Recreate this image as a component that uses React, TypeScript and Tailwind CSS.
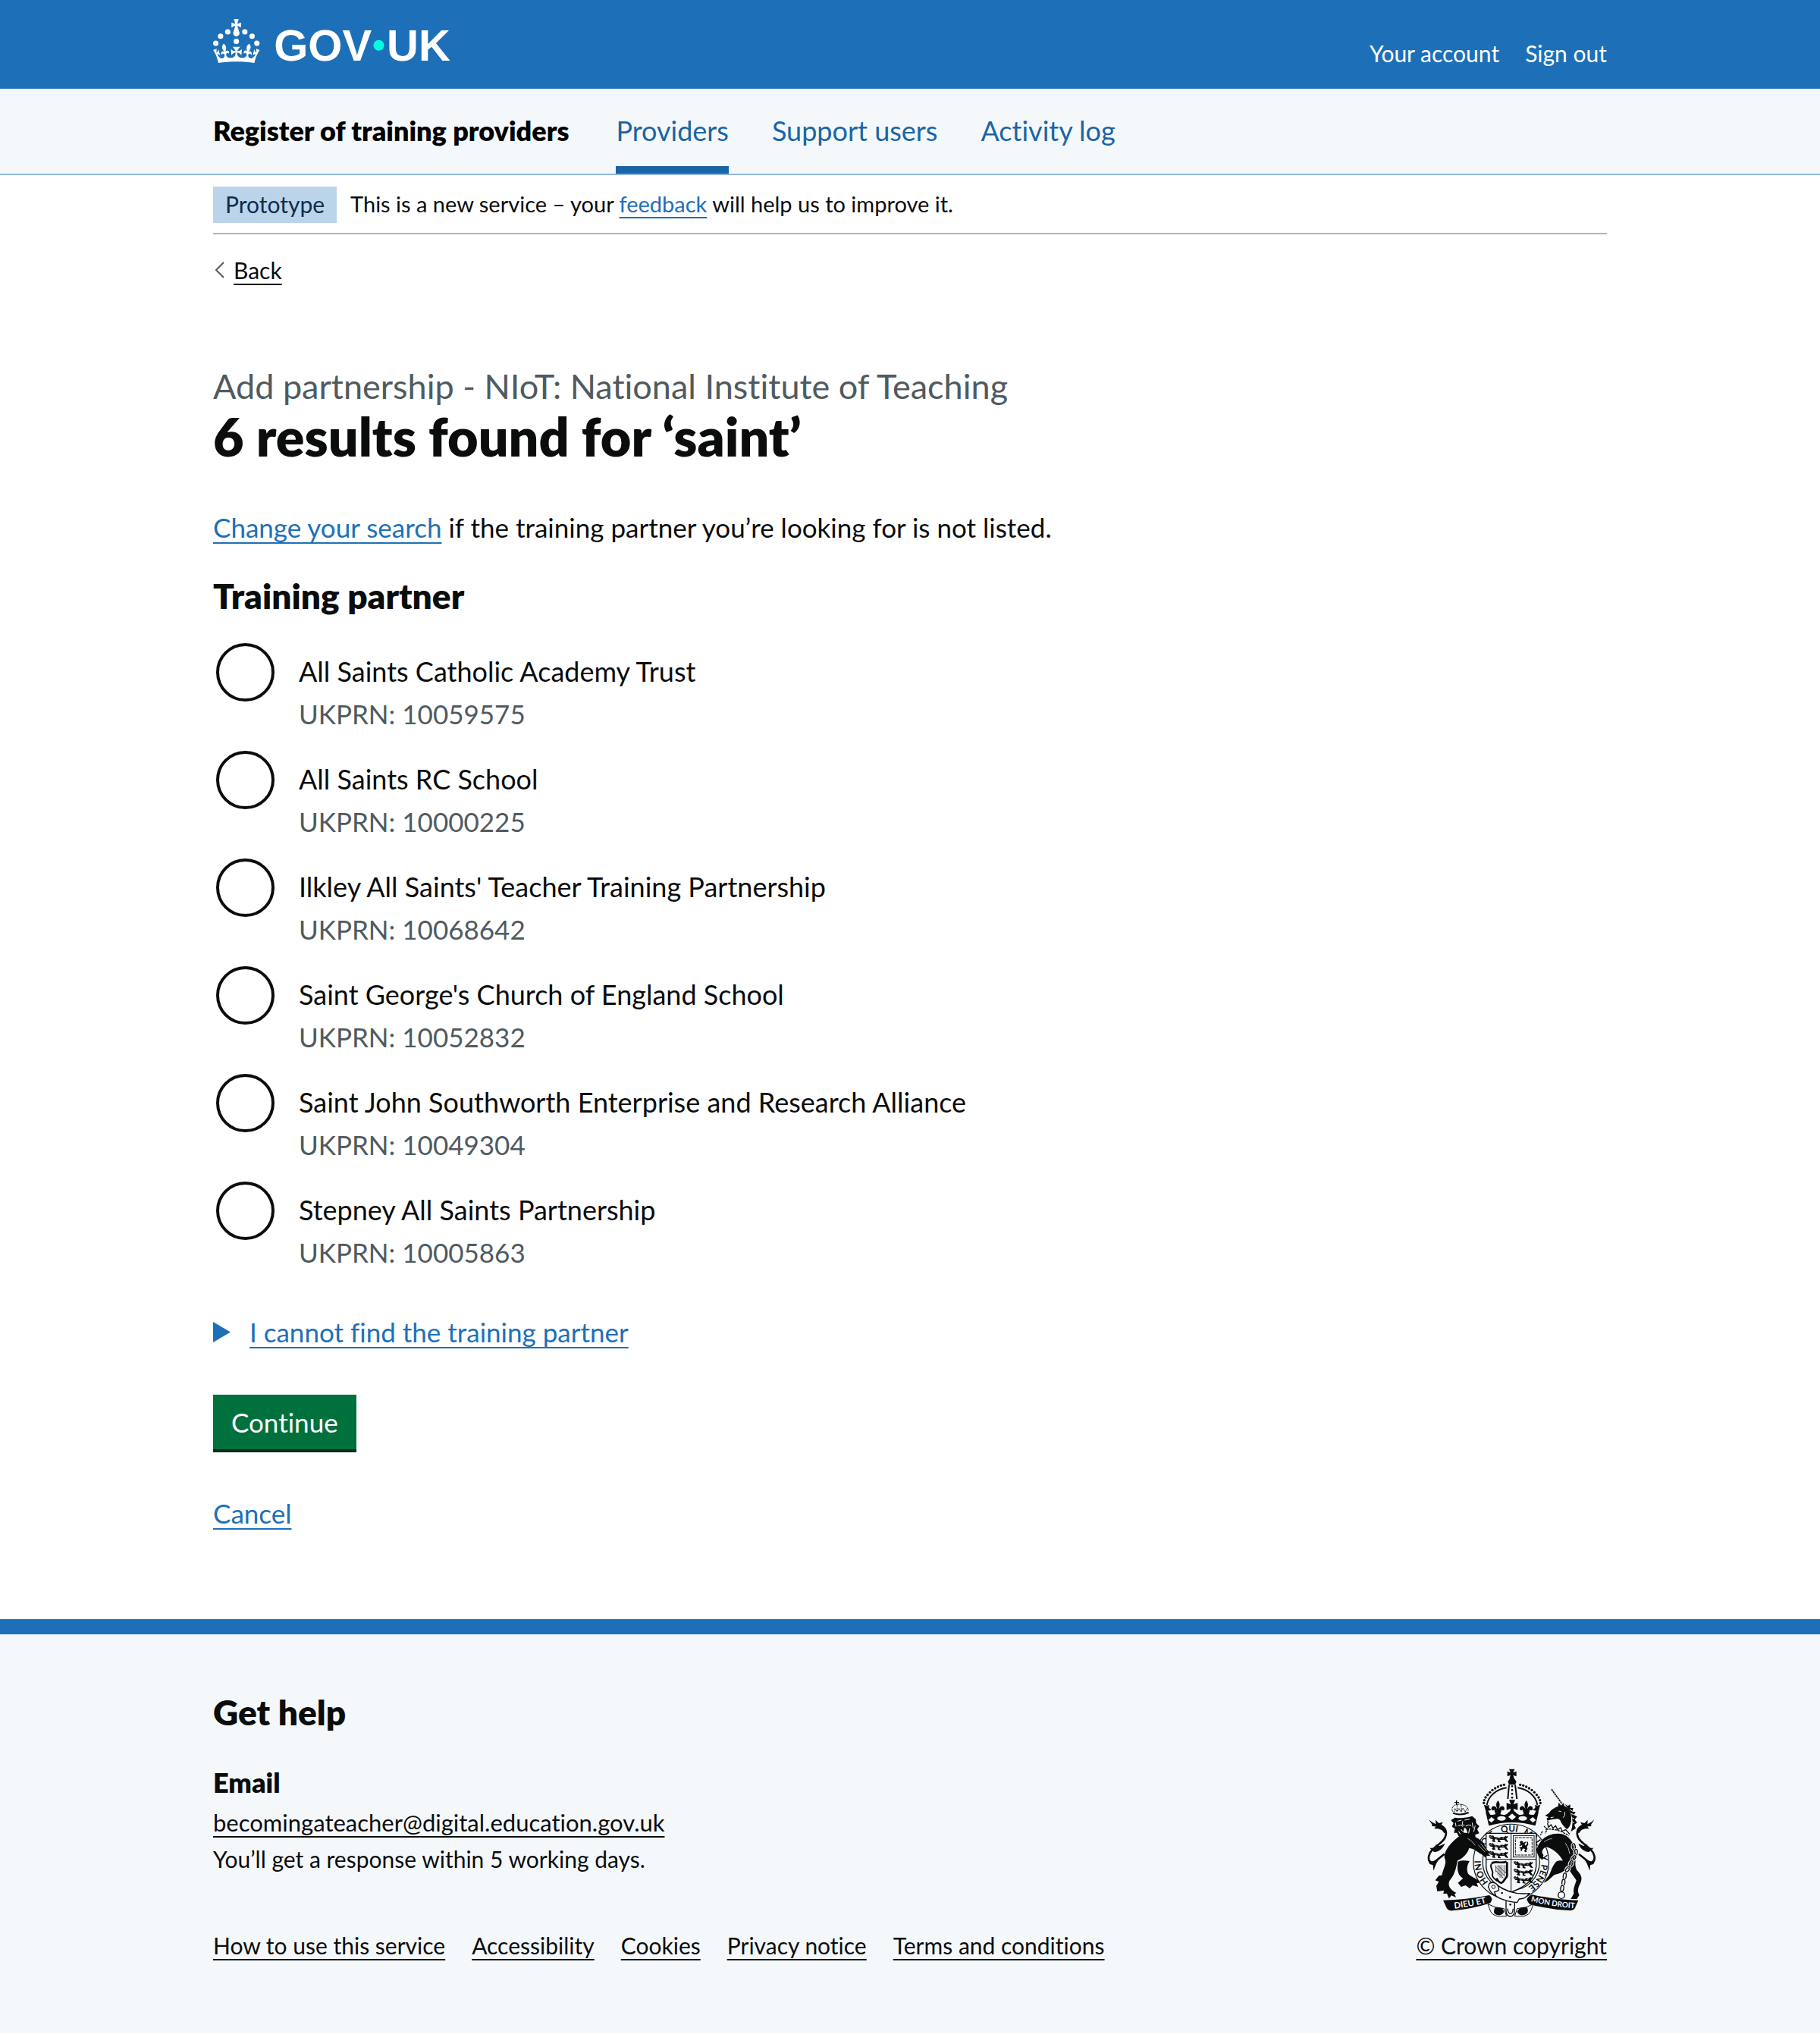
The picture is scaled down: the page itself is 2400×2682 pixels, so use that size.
import type { ReactNode } from "react";

const partners = [
  { name: "All Saints Catholic Academy Trust", ukprn: "10059575" },
  { name: "All Saints RC School", ukprn: "10000225" },
  { name: "Ilkley All Saints' Teacher Training Partnership", ukprn: "10068642" },
  { name: "Saint George's Church of England School", ukprn: "10052832" },
  { name: "Saint John Southworth Enterprise and Research Alliance", ukprn: "10049304" },
  { name: "Stepney All Saints Partnership", ukprn: "10005863" },
];

const footerLinks = ["How to use this service", "Accessibility", "Cookies", "Privacy notice", "Terms and conditions"];

function Container({ children, className = "" }: { children: ReactNode; className?: string }) {
  return <div className={`mx-auto w-full max-w-[1838px] ${className}`}>{children}</div>;
}

function TextLink({ children, className = "text-[#1a65a6]", href = "#" }: { children: ReactNode; className?: string; href?: string }) {
  return (
    <a
      href={href}
      className={`underline decoration-2 underline-offset-[6px] [text-decoration-skip-ink:none] hover:decoration-4 ${className}`}
    >
      {children}
    </a>
  );
}

function GovUkLogo() {
  return (
    <svg viewBox="0 0 324 60" className="h-[58px] w-auto overflow-visible" fill="currentColor" role="img" aria-label="GOV.UK">
      <circle cx="20" cy="17.6" r="3.7" />
      <circle cx="10.2" cy="23.5" r="3.7" />
      <circle cx="3.7" cy="33.2" r="3.7" />
      <circle cx="31.7" cy="30.6" r="3.7" />
      <circle cx="43.3" cy="17.6" r="3.7" />
      <circle cx="53.2" cy="23.5" r="3.7" />
      <circle cx="59.7" cy="33.2" r="3.7" />
      <path d="M33.1,9.8c.2-.1.3-.3.5-.5l4.6,2.4v-6.8l-4.6,1.5c-.1-.2-.3-.3-.5-.5l1.9-5.9h-6.7l1.9,5.9c-.2.1-.3.3-.5.5l-4.6-1.5v6.8l4.6-2.4c.1.2.3.3.5.5l-2.6,8c-.9,2.8,1.2,5.7,4.1,5.7h0c3,0,5.1-2.9,4.1-5.7l-2.6-8ZM37,37.9s-3.4,3.8-4.1,6.1c2.2,0,4.2-.5,6.4-2.8l-.7,8.5c-2-2.8-4.4-4.1-5.7-3.8.1,3.1.5,6.7,5.8,7.2,3.7.3,6.7-1.5,7-3.8.4-2.6-2-4.3-3.7-1.6-1.4-4.5,2.4-6.1,4.9-3.2-1.9-4.5-1.8-7.7,2.4-10.9,3,4,2.6,7.3-1.2,11.1,2.4-1.3,6.2,0,4,4.6-1.2-2.8-3.7-2.2-4.2.2-.3,1.7.7,3.7,3,4.2,1.9.3,4.7-.9,7-5.9-1.3,0-2.4.7-3.9,1.7l2.4-8c.6,2.3,1.4,3.7,2.2,4.5.6-1.6.5-2.8,0-5.3l5,1.8c-2.6,3.6-5.2,8.7-7.3,17.5-7.4-1.1-15.7-1.7-24.5-1.7h0c-8.8,0-17.1.6-24.5,1.7-2.1-8.9-4.7-13.9-7.3-17.5l5-1.8c-.5,2.5-.6,3.7,0,5.3.8-.8,1.6-2.3,2.2-4.5l2.4,8c-1.5-1-2.6-1.7-3.9-1.7,2.3,5,5.2,6.2,7,5.9,2.3-.4,3.3-2.4,3-4.2-.5-2.4-3-3.1-4.2-.2-2.2-4.6,1.6-6,4-4.6-3.7-3.7-4.2-7.1-1.2-11.1,4.2,3.2,4.3,6.4,2.4,10.9,2.5-2.8,6.3-1.3,4.9,3.2-1.8-2.7-4.1-1-3.7,1.6.3,2.3,3.3,4.1,7,3.8,5.4-.5,5.7-4.2,5.8-7.2-1.3-.2-3.7,1-5.7,3.8l-.7-8.5c2.2,2.3,4.2,2.7,6.4,2.8-.7-2.3-4.1-6.1-4.1-6.1h10.6,0Z" />
      <text x="83" y="57" className="font-['Liberation_Sans'] text-[60px] font-bold">GOV</text>
      <circle cx="226" cy="36" r="7.3" fill="#00ffe0" />
      <text x="237" y="57" className="font-['Liberation_Sans'] text-[60px] font-bold">UK</text>
    </svg>
  );
}

const archDots = [[376, 100], [364, 103], [352, 108], [341, 114], [330, 121], [320, 130], [311, 140], [303, 150], [298, 161], [296, 172]];
const chain = [[652, 345, -10], [660, 368, 10], [651, 391, 35], [641, 412, 20], [628, 434, 35], [616, 461, 10], [611, 486, 5], [606, 510, 10]];
const motto = [["HONI", "0%"], ["SOIT", "23%"], ["QUI", "41%"], ["MAL", "56%"], ["Y", "76%"], ["PENSE", "82%"]];

function Fleur({ x, y }: { x: number; y: number }) {
  return (
    <path
      transform={`translate(${x} ${y})`}
      d="M0-28C8-18 9-8 4 2L4 6C8-8 24-10 26 4C26 12 18 14 14 8C14 16 10 22 8 34H-8C-10 22-14 16-14 8C-18 14-26 12-26 4C-24-10-8-8-4 6L-4 2C-9-8-8-18 0-28Z"
    />
  );
}

function PassantLion({ x, y }: { x: number; y: number }) {
  return (
    <g transform={`translate(${x} ${y})`}>
      <path d="M2 3l6-3 5 3 6-2 4 7c8-3 10 3 18 2s14-5 20-1l8-6 3 3 4-3 2 5-8 7c4 3 4 6 9 10l-3 3-8-3-5-7c-8 2-12 0-17 1l-2 4 6 3-2 3-11-2 1-8-9-3-5 3 4 6-2 3-10-2-2-4 4-2-2-5-6 0-6-5z" />
      <path d="M6 6l5 2M14 5l-1 5M26 11l7 2M40 12l8-1M55 12l5 2" stroke="#f4f8fb" strokeWidth="2" />
    </g>
  );
}

function SupporterTail() {
  return (
    <g>
      <path d="M122 260C146 268 152 290 142 310C130 336 82 350 78 385C76 408 94 412 108 400L140 374" fill="none" stroke="currentColor" strokeWidth="8" />
      <path d="M80 238C90 250 100 252 106 256L105 239L118 252L134 248L127 260L142 272C148 284 142 294 138 290C132 276 116 272 100 274L106 265L90 264C96 256 84 252 80 238Z" />
      <path d="M82 350L108 350L106 336L122 342L142 332C136 350 122 364 100 366L92 360Z" />
      <path d="M74 396C88 412 108 408 120 392L108 412L97 440L95 418L82 414Z" />
    </g>
  );
}

function RoyalArms() {
  return (
    <svg viewBox="72 36 666 588" className="h-[196px] w-[222px]" fill="currentColor" aria-hidden="true">
      <defs>
        <path id="garter-line" d="M315 485A120 120 0 1 1 475 502" />
        <path id="scroll-left" d="M180 590Q250 582 326 562" />
        <path id="scroll-right" d="M482 561Q560 582 650 588" />
      </defs>

      {/* Imperial crown */}
      <path d="M396 38h22l-6 14 13-5v20l-13-5 5 14h-20l5-14-13 5v-20l13 5z" />
      <path d="M396 80C398 72 418 72 420 80L425 88L420 100H396L391 88Z" />
      <path d="M396 100L391 156M420 100L427 156" stroke="currentColor" strokeWidth="6" />
      {[106, 121, 136, 151].map((y) => <circle key={y} cx="408" cy={y} r="4" />)}
      {[1, -1].map((side) => (
        <g key={side} transform={side === 1 ? undefined : "translate(816 0) scale(-1 1)"}>
          {archDots.map(([x, y]) => <circle key={x} cx={x} cy={y} r="5" />)}
          <path d="M386 112C348 118 314 142 308 180" fill="none" stroke="currentColor" strokeWidth="6" />
          <Fleur x={352} y={190} />
          <path d="M296 178C302 184 312 182 318 180C314 190 318 196 326 196C322 204 314 204 312 200L324 224L310 226Z" />
        </g>
      ))}
      <path d="M396 160h24l-7 18 17-6v28l-17-6 6 20h-22l6-20-17 6v-28l17 6z" />
      <path d="M303 206C318 220 330 222 342 216Q352 226 362 216Q382 226 396 206H420Q434 226 454 216Q464 226 474 216C486 222 498 220 513 206L500 262Q408 236 316 262Z" />
      <g fill="#f4f8fb">
        <ellipse cx="366" cy="233" rx="17" ry="9" />
        <ellipse cx="450" cy="233" rx="17" ry="9" />
        <path d="M408 214l15 13-15 13-15-13zM326 228l13 10-13 12-12-10zM490 228l12 12-12 10-13-12z" />
      </g>

      {/* Garter */}
      <circle cx="404" cy="405" r="131" fill="#f4f8fb" stroke="currentColor" strokeWidth="40" />
      <circle cx="404" cy="405" r="131" fill="none" stroke="#f4f8fb" strokeWidth="33" />
      <text className="font-['Lato'] text-[35px] font-bold">
        {motto.map(([word, offset]) => (
          <textPath key={word} href="#garter-line" startOffset={offset}>{word}</textPath>
        ))}
      </text>

      {/* Shield */}
      <path d="M305 292H503V425Q496 492 404 525Q312 492 305 425Z" fill="#f4f8fb" stroke="currentColor" strokeWidth="4" />
      <path d="M404 292V525M305 395H503" stroke="currentColor" strokeWidth="3" />
      {[299, 330, 362].map((y) => <PassantLion key={y} x={314} y={y} />)}
      {[402, 432, 462].map((y) => <PassantLion key={y} x={412} y={y} />)}
      <g fill="none" stroke="currentColor" strokeWidth="3">
        <rect x="413" y="301" width="82" height="85" />
        <rect x="421" y="309" width="66" height="69" strokeDasharray="11 3" />
      </g>
      <path transform="translate(112 86) scale(.75)" d="M434 322l8-8 10 4 2 8 10-8 4 4-8 10 6 8 8-12-4-10 8 2 2 14-8 12 4 10-8 10 4 6-8 2-6-6 6-10-10-4-8 8 2 6-8 0 0-12-8-4 4-4 10-2 2-10-12 6-4-4 8-8z" />
      <g fill="none" stroke="currentColor">
        <path d="M326 412C340 398 358 414 386 404M388 406V462L372 484C362 494 352 482 346 470" strokeWidth="8" />
        <path d="M326 414C318 428 336 440 330 454C326 466 342 474 350 482" strokeWidth="6" />
        <path d="M344 418V446M352 418V460M360 418V468M368 418V470M376 418V462M384 418V450M342 424L382 464M342 438L374 470M352 420L386 452" strokeWidth="2" />
      </g>

      {/* Lion supporter */}
      <SupporterTail />
      <path d="M204 300C232 288 268 304 290 326C304 342 300 352 320 366L314 372L322 382L304 380L302 388L286 374C272 368 262 354 238 350C232 372 215 390 192 400C186 430 182 455 160 480C152 500 164 516 188 528L180 532L186 546L168 538L158 550L150 530L136 532L138 518L112 522L108 500L118 484L104 478L118 460L130 458C136 430 152 410 140 388C138 360 168 325 204 300Z" />
      <path d="M194 404C210 398 226 400 240 402C228 420 228 438 234 452C244 464 262 466 282 486L268 490L274 504L252 498L240 510L224 498L206 504L194 488L214 470C196 460 188 440 194 404Z" />
      <path d="M182 230L166 240L176 252L170 266L182 274L178 290L190 290L196 304L212 300L224 314L240 304L264 316L262 298L278 292L270 276L278 264L266 252L264 236L250 224C230 230 205 234 182 230Z" />
      <g fill="none" stroke="#f4f8fb" strokeWidth="3">
        <path d="M192 244L208 240M220 240L240 236M213 244L210 258L220 260M194 262Q206 256 214 266M224 264Q236 254 246 262M206 276Q216 294 232 288M240 272L236 292M250 250L254 272M262 262L256 286M196 284L204 296M184 250L186 266" />
        <path d="M232 312Q248 320 262 340M274 338L300 366M284 334L308 362" strokeWidth="2" />
      </g>
      <path d="M218 270q10 0 12 18h-14z" fill="#f4f8fb" />
      <g fill="none" stroke="currentColor">
        <path d="M174 212Q202 224 236 210" strokeWidth="6" />
        <path d="M172 206C164 180 190 178 190 178C210 174 238 184 234 204M178 208L182 194L190 208L198 194L206 208L214 192L222 208L230 194M190 178V206M206 178L208 206" strokeWidth="3" strokeDasharray="5 2" />
        <path d="M188 162V180M180 170H198" strokeWidth="4" />
      </g>

      {/* Unicorn supporter */}
      <g transform="translate(812 0) scale(-1 1)"><SupporterTail /></g>
      <path d="M564 118L606 176" stroke="currentColor" strokeWidth="5" strokeDasharray="8 2" />
      <path d="M590 186L592 170L602 182L612 172L614 184C632 190 644 210 642 236C642 256 634 270 624 276C610 262 602 252 598 240C588 230 574 238 562 238L548 242L544 234L552 228L538 222L554 212C560 202 574 190 590 186Z" />
      <path d="M616 176L628 184L638 178L638 192L650 192L646 206L659 208L652 220L665 226L656 238L665 250L654 258L660 272L640 286C650 260 650 222 632 198Z" />
      <g fill="none" stroke="#f4f8fb" strokeWidth="3">
        <path d="M592 204L602 206M610 230Q620 222 616 208M572 228L560 230M636 198L646 204M640 214L652 218M642 230L654 234M642 246L654 250" />
      </g>
      <g fill="none" stroke="currentColor" strokeWidth="4">
        <path d="M548 252L552 268L562 258L570 272L580 262L588 278L600 270L606 284L620 278L636 296" />
        <path d="M540 276Q590 272 632 302M534 264L548 276L538 292M528 284L520 300M546 246L558 250" strokeDasharray="9 3" />
      </g>
      <path d="M520 326C540 298 580 288 610 296C642 308 656 340 660 372C662 402 652 412 664 438C684 458 686 470 678 490C670 505 664 520 674 536L664 552L640 552L652 530C648 510 660 490 662 478L644 452C630 430 614 416 606 395C590 370 566 352 544 346C530 350 520 365 532 378L528 398L516 388L506 368C504 350 510 338 520 326Z" />
      <path d="M582 404C596 396 616 400 626 404V425C618 442 600 450 576 456C562 466 552 482 532 488L546 468C562 454 560 430 582 404Z" />
      <path d="M534 326Q556 312 566 314M618 330Q634 350 636 374" fill="none" stroke="#f4f8fb" strokeWidth="2" />
      {chain.map(([x, y, turn]) => (
        <g key={y} transform={`translate(${x} ${y}) rotate(${turn})`} fill="none">
          <ellipse rx="7" ry="12" stroke="#f4f8fb" strokeWidth="9" />
          <ellipse rx="6" ry="12" stroke="currentColor" strokeWidth="4" />
        </g>
      ))}
      <circle cx="603" cy="537" r="13" fill="none" stroke="currentColor" strokeWidth="4" />

      {/* Scroll */}
      <path d="M135 557Q220 556 318 537Q336 550 322 568Q250 592 172 598Q154 600 148 586Z" />
      <path d="M670 557Q590 556 486 535Q470 542 466 554Q474 572 480 574Q560 594 640 598Q656 596 660 580Z" />
      <path d="M312 572C322 596 320 612 350 620H386L376 590L340 584Z" fill="#f4f8fb" stroke="currentColor" strokeWidth="3" />
      <path d="M492 572C482 596 484 612 454 620H418L428 590L464 584Z" fill="#f4f8fb" stroke="currentColor" strokeWidth="3" />
      <path d="M340 586Q372 580 376 602Q372 616 350 616Q328 612 340 586ZM468 586Q436 580 428 602Q432 616 452 616Q478 612 468 586Z" />
      <g fill="#f4f8fb" className="font-['Lato'] font-bold">
        <text className="text-[34px]"><textPath href="#scroll-left">DIEU ET</textPath></text>
        <text className="text-[30px]"><textPath href="#scroll-right">MON DROIT</textPath></text>
      </g>

      {/* Belt buckle */}
      <g fill="#f4f8fb" stroke="currentColor" strokeWidth="4">
        <path d="M384 548H418V596Q418 620 401 621Q384 620 384 596Z" />
        <path d="M344 494C370 514 410 536 476 530Q462 552 436 552L428 566C388 562 346 550 328 524Z" />
        <path d="M318 490Q340 480 352 500L356 516Q350 522 338 524L344 540Q322 530 314 504Z" />
      </g>
      <path d="M390 590Q392 610 401 610Q411 610 412 590" fill="none" stroke="currentColor" strokeWidth="4" />
      <circle cx="334" cy="504" r="7" fill="none" stroke="currentColor" strokeWidth="3" />
      {[[368, 528], [400, 545], [401, 574]].map(([x, y]) => <circle key={y} cx={x} cy={y} r="4" />)}
    </svg>
  );
}

export default function App() {
  return (
    <div className="min-h-screen bg-white font-['Lato','Liberation_Sans',sans-serif] text-[#0b0c0c] [font-variant-ligatures:none]">
      <header>
        <div className="bg-[#1d70b8] text-white">
          <Container className="flex items-start justify-between pt-[25px] pb-[34px]">
            <a href="#" aria-label="GOV.UK home"><GovUkLogo /></a>
            <nav aria-label="Account" className="-mb-3 flex gap-[34px] pt-[26px] text-[30px] leading-[38px]">
              <a href="#" className="hover:underline">Your account</a>
              <a href="#" className="hover:underline">Sign out</a>
            </nav>
          </Container>
        </div>
        <div className="border-b-2 border-[#8eb8dc] bg-[#f4f8fb]">
          <Container className="flex gap-[62px] text-[36px] leading-[48px]">
            <a href="#" className="pt-[31px] font-extrabold text-black">Register of training providers</a>
            <nav aria-label="Service" className="flex gap-[57px] text-[#1a65a6]">
              <a href="#" aria-current="page" className="border-b-10 border-[#1a65a6] pt-[31px] pb-[23px]">Providers</a>
              <a href="#" className="pt-[31px]">Support users</a>
              <a href="#" className="pt-[31px]">Activity log</a>
            </nav>
          </Container>
        </div>
      </header>

      <Container>
        <div className="flex items-start gap-[18px] border-b-2 border-[#b1b4b6] pt-[15px] pb-[13px] text-[29px] leading-[46px]">
          <strong className="bg-[#bbd4ea] px-4 pb-0.5 text-[30px] font-normal text-[#0c2d4a]">Prototype</strong>
          <span>
            This is a new service – your <TextLink className="text-[#1d70b8]">feedback</TextLink> will help us to improve it.
          </span>
        </div>

        <div className="flex pt-7 text-[30px] leading-[38px]">
          <div className="flex items-center gap-[11px]">
            <svg viewBox="0 0 14 22" className="ml-0.5 h-[22px] w-[14px]" fill="none" stroke="#505a5f" strokeWidth="2" aria-hidden="true">
              <path d="M12 1L2 11l10 10" />
            </svg>
            <TextLink className="text-[#0b0c0c]">Back</TextLink>
          </div>
        </div>

        <main className="pt-[106px] pb-[116px] text-[35px] leading-[48px]">
          <h1 className="text-[70px] leading-[76px] font-extrabold">
            <span className="block text-[45px] leading-[56px] font-normal text-[#505a5f]">
              Add partnership - NIoT: National Institute of Teaching
            </span>
            6 results found for ‘saint’
          </h1>
          <p className="mt-[58px]">
            <TextLink className="text-[#1d70b8]">Change your search</TextLink> if the training partner you’re looking for is not listed.
          </p>

          <form className="mt-[38px]" onSubmit={(e) => e.preventDefault()}>
            <fieldset>
              <legend className="text-[46px] leading-[58px] font-extrabold">Training partner</legend>
              <div className="mt-[33px] flex flex-col gap-[25px]">
                {partners.map((p) => (
                  <div key={p.ukprn} className="flex items-start gap-8 pl-1">
                    <input
                      type="radio"
                      name="partner"
                      id={`partner-${p.ukprn}`}
                      aria-describedby={`hint-${p.ukprn}`}
                      className="size-[77px] shrink-0 appearance-none rounded-full border-4 border-[#0b0c0c] bg-white checked:bg-[#0b0c0c] checked:shadow-[inset_0_0_0_16px_white]"
                    />
                    <div className="pt-[13px]">
                      <label htmlFor={`partner-${p.ukprn}`} className="block text-[36px]">{p.name}</label>
                      <div id={`hint-${p.ukprn}`} className="mt-2 text-[#505a5f]">UKPRN: {p.ukprn}</div>
                    </div>
                  </div>
                ))}
              </div>
            </fieldset>

            <details className="mt-[57px] text-[#1d70b8]">
              <summary className="flex cursor-pointer list-none items-center gap-[25px]">
                <svg viewBox="0 0 23 27" className="h-[27px] w-[23px]" fill="currentColor" aria-hidden="true"><path d="M0 0l23 13.5L0 27z" /></svg>
                <span className="underline decoration-2 underline-offset-[6px] [text-decoration-skip-ink:none]">
                  I cannot find the training partner
                </span>
              </summary>
            </details>

            <button
              type="submit"
              className="mt-[59px] block bg-[#00703c] px-6 leading-[72px] text-white shadow-[0_4px_0_#002d18]"
            >
              Continue
            </button>
            <p className="mt-[60px]"><TextLink className="text-[#1d70b8]">Cancel</TextLink></p>
          </form>
        </main>
      </Container>

      <footer className="border-t-20 border-[#1d70b8] bg-[#f4f8fb] pt-[74px] pb-[97px]">
        <Container className="flex items-end justify-between">
          <div>
            <h2 className="text-[46px] leading-[58px] font-extrabold">Get help</h2>
            <h3 className="mt-[39px] text-[36px] leading-[48px] font-extrabold">Email</h3>
            <div className="mt-[5px] text-[30px] leading-[48px]">
              <p className="text-[31px]"><TextLink className="text-[#0b0c0c]">becomingateacher@digital.education.gov.uk</TextLink></p>
              <p>You’ll get a response within 5 working days.</p>
            </div>
            <ul className="mt-[71px] flex gap-[35px] text-[30px] leading-[38px]">
              {footerLinks.map((l) => (
                <li key={l}><TextLink className="text-[#0b0c0c]">{l}</TextLink></li>
              ))}
            </ul>
          </div>
          <div className="flex flex-col items-center gap-[18px] text-[30px] leading-[38px]">
            <RoyalArms />
            <TextLink className="text-[#0b0c0c]">© Crown copyright</TextLink>
          </div>
        </Container>
      </footer>
    </div>
  );
}
